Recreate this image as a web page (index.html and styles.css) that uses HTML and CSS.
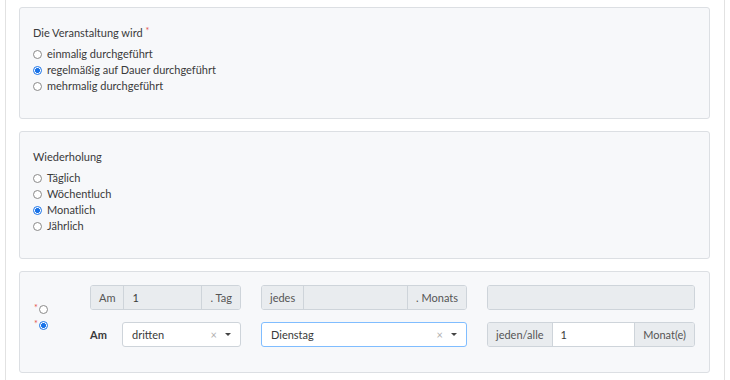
FILE: index.html
```html
<!DOCTYPE html>
<html lang="de">
<head>
  <meta charset="UTF-8">
  <meta name="viewport" content="width=device-width, initial-scale=1.0">
  <title>Veranstaltung</title>
  <link rel="stylesheet" href="styles.css">
</head>
<body>
  <div class="page">
    <section class="panel">
      <div class="field-label">Die Veranstaltung wird <span class="req">*</span></div>
      <label class="radio"><input type="radio" name="art"> einmalig durchgeführt</label>
      <label class="radio"><input type="radio" name="art" checked> regelmäßig auf Dauer durchgeführt</label>
      <label class="radio"><input type="radio" name="art"> mehrmalig durchgeführt</label>
    </section>

    <section class="panel">
      <div class="field-label">Wiederholung</div>
      <label class="radio"><input type="radio" name="rep"> Täglich</label>
      <label class="radio"><input type="radio" name="rep"> Wöchentluch</label>
      <label class="radio"><input type="radio" name="rep" checked> Monatlich</label>
      <label class="radio"><input type="radio" name="rep"> Jährlich</label>
    </section>

    <section class="panel panel-repeat">
      <div class="mode">
        <label class="mode-opt"><span class="req">*</span><input type="radio" name="mode"></label>
        <label class="mode-opt"><span class="req">*</span><input type="radio" name="mode" checked></label>
      </div>

      <div class="repeat-grid">
        <div class="input-group">
          <span class="addon">Am</span>
          <input class="control" type="text" value="1" disabled>
          <span class="addon">. Tag</span>
        </div>
        <div class="input-group">
          <span class="addon">jedes</span>
          <input class="control" type="text" value="" disabled>
          <span class="addon">. Monats</span>
        </div>
        <div class="input-group">
          <input class="control" type="text" value="" disabled>
        </div>

        <div class="am-field">
          <span class="am-label">Am</span>
          <div class="select">
            <span class="select-value">dritten</span>
            <span class="select-clear">×</span>
            <span class="select-caret"></span>
          </div>
        </div>
        <div class="select select-focus">
          <span class="select-value">Dienstag</span>
          <span class="select-clear">×</span>
          <span class="select-caret"></span>
        </div>
        <div class="input-group">
          <span class="addon">jeden/alle</span>
          <input class="control control-active" type="text" value="1">
          <span class="addon">Monat(e)</span>
        </div>
      </div>
    </section>
  </div>
</body>
</html>
```

FILE: styles.css
```css
:root {
  --text: #3a3a3a;
  --text-muted: #555555;
  --panel-bg: #f7f8fa;
  --panel-border: #dcdfe3;
  --addon-bg: #e9ecef;
  --input-border: #ced4da;
  --focus-border: #80bdff;
  --required: #e4534c;
  --radio-blue: #1a73e8;
}

* {
  box-sizing: border-box;
  margin: 0;
  padding: 0;
}

body {
  font-family: 'Lato', 'Open Sans', sans-serif;
  font-size: 11px;
  color: var(--text);
  background: #ffffff;
}

.page {
  margin-left: 5px;
  width: 720px;
  min-height: 380px;
  padding: 7px 14px 0 13px;
  border-left: 1px solid #e2e2e2;
  border-right: 1px solid #e2e2e2;
}

.panel {
  background-color: var(--panel-bg);
  border: 1px solid var(--panel-border);
  border-radius: 3px;
  padding: 17px 13px 24px;
  margin-bottom: 12px;
}

.field-label {
  line-height: 16px;
  margin-bottom: 5px;
}

.req {
  color: var(--required);
  font-size: 9px;
  vertical-align: top;
  line-height: 12px;
}

.radio {
  display: flex;
  align-items: center;
  gap: 5px;
  line-height: 16px;
  height: 16px;
}

input[type="radio"] {
  appearance: none;
  -webkit-appearance: none;
  width: 9px;
  height: 9px;
  border: 1px solid #8a8a8a;
  border-radius: 50%;
  background: #ffffff;
  flex-shrink: 0;
}

input[type="radio"]:checked {
  border-color: var(--radio-blue);
  background: radial-gradient(circle, var(--radio-blue) 0 2.2px, #ffffff 2.7px);
}

/* third panel */
.panel-repeat {
  display: flex;
  padding: 13px 0 25px;
}

.mode {
  width: 70px;
  display: flex;
  flex-direction: column;
  justify-content: center;
  gap: 7px;
  padding-left: 14px;
  padding-top: 2px;
}

.mode-opt {
  display: flex;
  align-items: flex-start;
  gap: 1px;
  height: 9px;
}

.mode-opt .req {
  line-height: 6px;
}

.repeat-grid {
  display: grid;
  grid-template-columns: 151px 206px 208px;
  column-gap: 20px;
  row-gap: 12px;
}

.input-group {
  display: flex;
  height: 25px;
  border: 1px solid var(--input-border);
  border-radius: 3px;
  overflow: hidden;
}

.addon {
  display: flex;
  align-items: center;
  padding: 0 8px;
  background: var(--addon-bg);
  color: var(--text-muted);
  white-space: nowrap;
}

.addon:first-child {
  border-right: 1px solid var(--input-border);
}

.addon:last-child {
  border-left: 1px solid var(--input-border);
}

.control {
  flex: 1;
  min-width: 0;
  border: none;
  padding: 0 8px;
  font: inherit;
  color: var(--text);
  background: var(--addon-bg);
}

.control-active {
  background: #ffffff;
}

.am-field {
  display: flex;
  align-items: center;
}

.am-label {
  width: 32px;
  font-weight: 700;
}

.am-field .select {
  flex: 1;
}

.select {
  display: flex;
  align-items: center;
  height: 25px;
  padding: 0 9px;
  background: #ffffff;
  border: 1px solid var(--input-border);
  border-radius: 3px;
}

.select-focus {
  border-color: var(--focus-border);
}

.select-value {
  flex: 1;
}

.select-clear {
  color: #b0b0b0;
  font-size: 11px;
  margin-right: 8px;
}

.select-caret {
  width: 0;
  height: 0;
  border-left: 3.5px solid transparent;
  border-right: 3.5px solid transparent;
  border-top: 3.5px solid #444444;
}
```
